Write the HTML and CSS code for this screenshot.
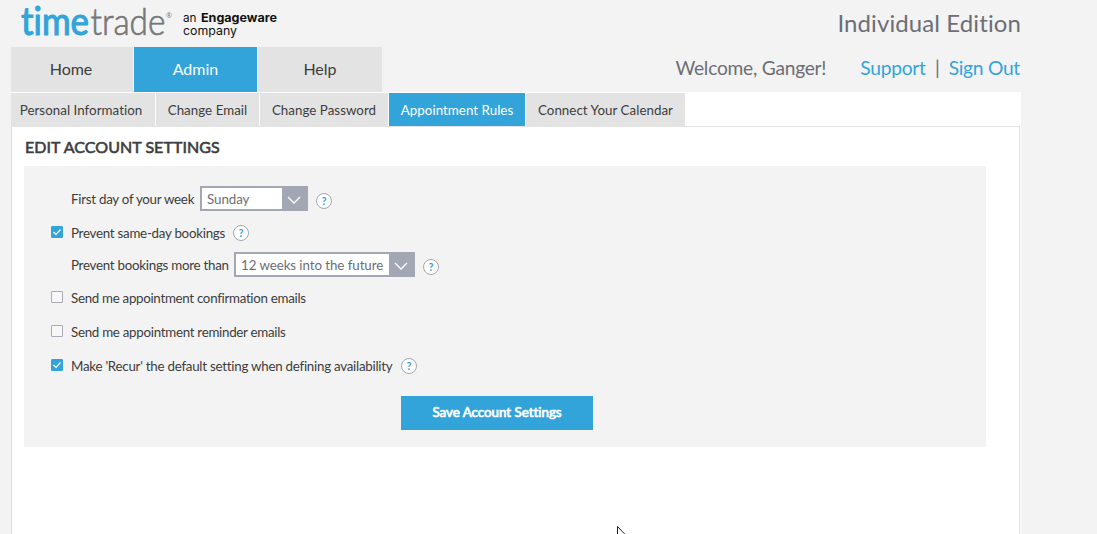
FILE: index.html
```
<!DOCTYPE html>
<html lang="en">
<head>
<meta charset="utf-8">
<title>TimeTrade - Appointment Rules</title>
<link rel="stylesheet" href="styles.css">
</head>
<body>
<div class="page">
  <header class="header">
    <div class="brand-side">
      <svg class="logo" width="280" height="47" viewBox="0 0 280 47" role="img" aria-label="timetrade, an Engageware company">
        <text class="logo-time" x="10" y="34.500" textLength="68" lengthAdjust="spacingAndGlyphs">time</text>
        <text class="logo-trade" x="79.500" y="34.500" textLength="75" lengthAdjust="spacingAndGlyphs">trade</text>
        <text class="logo-reg" x="155" y="18">®</text>
        <text class="logo-sub" x="172" y="22" textLength="13.500" lengthAdjust="spacingAndGlyphs">an</text>
        <text class="logo-sub logo-bold" x="190" y="22" textLength="76" lengthAdjust="spacingAndGlyphs">Engageware</text>
        <text class="logo-sub" x="172" y="35" textLength="54" lengthAdjust="spacingAndGlyphs">company</text>
      </svg>
      <nav class="main-tabs">
        <a class="tab">Home</a>
        <a class="tab active">Admin</a>
        <a class="tab">Help</a>
      </nav>
    </div>
    <div class="account">
      <div class="edition">Individual Edition</div>
      <div class="welcome"><span class="hello">Welcome, Ganger!</span><a class="link support">Support</a><span class="bar">|</span><a class="link signout">Sign Out</a></div>
    </div>
  </header>
  <main class="content">
    <nav class="sub-tabs">
      <a class="sub s1">Personal Information</a>
      <a class="sub s2">Change Email</a>
      <a class="sub s3">Change Password</a>
      <a class="sub s4 active">Appointment Rules</a>
      <a class="sub s5">Connect Your Calendar</a>
    </nav>
    <section class="sheet">
      <h1 class="title">EDIT ACCOUNT SETTINGS</h1>
      <form class="settings">
        <div class="row indent">
          <span class="label l1">First day of your week</span>
          <span class="select day"><span class="value">Sunday</span><svg class="chevron" width="14" height="8" viewBox="0 0 14 8"><path d="M1 1l6 6 6-6"/></svg></span>
          <span class="help low">?</span>
        </div>
        <div class="row r2">
          <span class="check on"><svg width="12" height="12" viewBox="0 0 12 12"><path d="M2.500 6l2.500 2.500 4.500-5"/></svg></span>
          <span class="label l2">Prevent same-day bookings</span>
          <span class="help">?</span>
        </div>
        <div class="row indent r3">
          <span class="label l3">Prevent bookings more than</span>
          <span class="select range"><span class="value">12 weeks into the future</span><svg class="chevron" width="14" height="8" viewBox="0 0 14 8"><path d="M1 1l6 6 6-6"/></svg></span>
          <span class="help low">?</span>
        </div>
        <div class="row r4">
          <span class="check"></span>
          <span class="label l4">Send me appointment confirmation emails</span>
        </div>
        <div class="row r5">
          <span class="check"></span>
          <span class="label l5">Send me appointment reminder emails</span>
        </div>
        <div class="row r6">
          <span class="check on"><svg width="12" height="12" viewBox="0 0 12 12"><path d="M2.500 6l2.500 2.500 4.500-5"/></svg></span>
          <span class="label l6">Make 'Recur' the default setting when defining availability</span>
          <span class="help">?</span>
        </div>
        <button class="save" type="button">Save Account Settings</button>
      </form>
    </section>
  </main>
</div>
<svg class="cursor" width="12" height="19" viewBox="0 0 12 19"><path d="M.5.5v16l4-4 3 6 2-1-3-5.500h5z"/></svg>
</body>
</html>
```
FILE: styles.css
```
* { box-sizing: border-box; }
body {
  margin: 0;
  height: 534px;
  overflow: hidden;
  background: #f3f3f3;
  color: #3d3d3d;
  font-family: Lato, "Liberation Sans", sans-serif;
  font-size: 13.33px;
  font-variant-ligatures: none;
}
.page { width: 1010px; height: 534px; margin-left: 11px; display: flex; flex-direction: column; }
.header { height: 92px; display: flex; justify-content: space-between; }
.logo { display: block; overflow: visible; }
.logo-time { font-size: 38px; font-weight: 400; fill: #32a4da; stroke: #32a4da; stroke-width: 1.1px; }
.logo-trade { font-size: 38px; font-weight: 300; fill: #777; stroke: #777; stroke-width: .7px; }
.logo-reg { font-family: "Open Sans", sans-serif; font-size: 7px; fill: #777; }
.logo-sub { font-family: Inter, sans-serif; font-size: 12px; fill: #111; }
.logo-bold { font-weight: 700; }
.main-tabs { display: flex; gap: 1px; width: 371px; }
.tab {
  width: 123px; height: 45px; background: #e3e3e3; flex: none;
  display: flex; align-items: center; justify-content: center;
  font-size: 16px; padding-bottom: 2px;
}
.tab:first-child { width: 122px; padding-right: 2px; }
.tab:last-child { width: 124px; }
.active { background: #32a4da; color: #fff; }
.account { text-align: right; color: #6d6e75; }
.edition { font-size: 24px; letter-spacing: .1px; line-height: 30px; padding-top: 8px; white-space: nowrap; }
.welcome { display: flex; justify-content: flex-end; font-size: 19.2px; letter-spacing: -.25px; line-height: 24px; margin-top: 18px; padding-right: 1px; white-space: nowrap; }
.hello { margin-right: 34px; }
.bar { width: 23px; text-align: center; }
.link { color: #32a4da; }
.content { flex: 1; background: #fff; padding-top: 1px; display: flex; flex-direction: column; }
.sub-tabs { height: 34px; display: flex; gap: 1px; width: 1009px; border-bottom: 1px solid #e3e3e3; }
.sub { height: 33px; background: #e3e3e3; display: flex; align-items: center; justify-content: center; white-space: nowrap; padding-top: 1px; letter-spacing: .04px; }
.sub.active { background: #32a4da; }
.s1 { width: 144px; padding-right: 4px; }
.s2 { width: 103px; }
.s3 { width: 128px; }
.s4 { width: 136px; }
.s5 { width: 159px; }
.sheet { flex: 1; width: 1009px; border: solid #dedede; border-width: 0 1px; padding: 10px 12px 0; }
.title { margin: 0; padding-left: 1px; font-size: 16px; line-height: 20px; height: 29px; font-weight: 400; letter-spacing: .05px; -webkit-text-stroke: .6px #3d3d3d; }
.settings { width: 962px; height: 281px; background: #f3f3f3; padding: 20px 0 0 27px; }
.row { height: 26px; display: flex; align-items: center; margin-bottom: 8px; }
.row.indent { padding-left: 20px; }
.r2 { margin-bottom: 6px; }
.r3 { margin-bottom: 7px; }
.r6 { margin-bottom: 17px; }
.label { white-space: nowrap; flex: none; padding-bottom: 1px; letter-spacing: -.26px; }
.l1 { width: 129px; }
.l2 { width: 162px; }
.l3 { width: 163px; }
.l4 { letter-spacing: -.3px; }
.l5 { letter-spacing: -.28px; }
.l6 { width: 330px; letter-spacing: -.25px; }
.select { height: 25px; align-self: flex-start; border: 2px solid #a3a7b4; background: #fff; color: #6d6e75; display: flex; flex: none; margin-right: 8px; }
.day { width: 108px; }
.range { width: 181px; }
.value { flex: 1; padding-left: 5px; line-height: 23px; white-space: nowrap; letter-spacing: -.07px; }
.chevron { flex: none; width: 24px; height: 21px; padding: 8px 5px 5px; background: #a3a7b4; fill: none; stroke: #fff; stroke-width: 1.3; }
.help {
  width: 16px; height: 16px; flex: none; border: 1px solid #a3a7b4; border-radius: 50%; background: #fff;
  color: #32a4da; text-align: center; font-size: 11px; font-weight: 700; line-height: 13px;
}
.low { margin-top: 3px; }
.check { width: 12px; height: 12px; flex: none; margin: -3px 8px 0 0; border: 1px solid #a9acb8; border-radius: 1px; background: #f7f7f7; }
.check svg { display: block; margin: -1px; fill: none; stroke: #fff; stroke-width: 1.2; }
.on { background: #32a4da; border-color: #32a4da; }
.save { display: block; width: 192px; height: 34px; margin: 0 0 0 350px; padding: 0 0 2px; border: 0; background: #32a4da; color: #fff; font-family: Lato, sans-serif; font-size: 13.33px; font-variant-ligatures: none; -webkit-text-stroke: .7px #fff; }
.cursor { position: absolute; left: 617px; top: 526px; fill: #fff; stroke: #222; stroke-width: 1; }
```
